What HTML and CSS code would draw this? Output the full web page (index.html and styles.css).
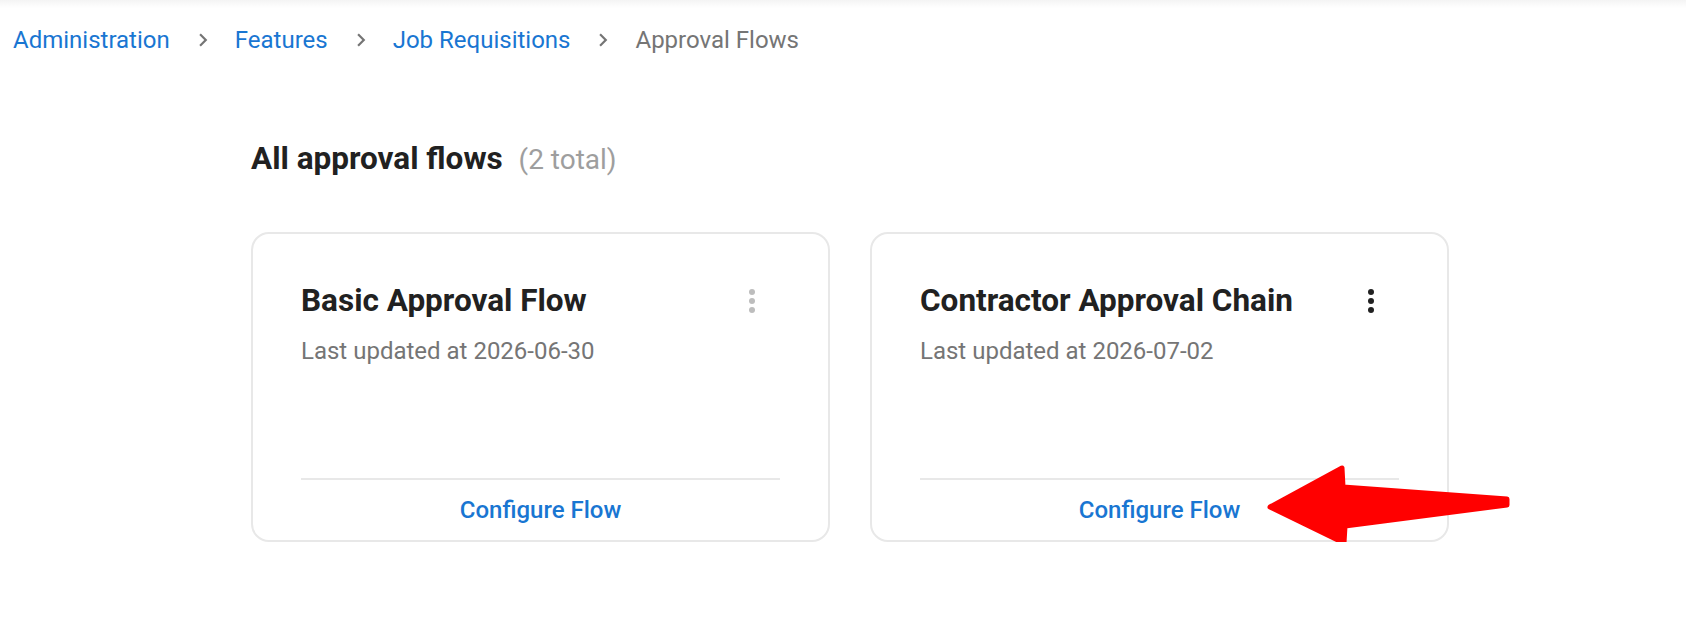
FILE: index.html
```html
<!DOCTYPE html>
<html lang="en">
<head>
    <meta charset="UTF-8">
    <meta name="viewport" content="width=device-width, initial-scale=1.0">
    <title>Approval Flows</title>
    <link rel="stylesheet" href="styles.css">
</head>
<body>
    <div class="top-shade"></div>

    <nav class="breadcrumb">
        <a href="#">Administration</a>
        <svg class="crumb-sep" viewBox="0 0 24 24"><path d="M10 6L8.59 7.41 13.17 12l-4.58 4.59L10 18l6-6z"/></svg>
        <a href="#">Features</a>
        <svg class="crumb-sep" viewBox="0 0 24 24"><path d="M10 6L8.59 7.41 13.17 12l-4.58 4.59L10 18l6-6z"/></svg>
        <a href="#">Job Requisitions</a>
        <svg class="crumb-sep" viewBox="0 0 24 24"><path d="M10 6L8.59 7.41 13.17 12l-4.58 4.59L10 18l6-6z"/></svg>
        <span class="current">Approval Flows</span>
    </nav>

    <main class="content">
        <h1 class="page-title">All approval flows <span class="count">(2 total)</span></h1>

        <div class="flow-list">
            <div class="flow-card">
                <div class="card-head">
                    <h2>Basic Approval Flow</h2>
                    <button class="menu-btn is-muted" aria-label="More">
                        <svg viewBox="0 0 24 28"><circle cx="12" cy="5" r="3"/><circle cx="12" cy="14" r="3"/><circle cx="12" cy="23" r="3"/></svg>
                    </button>
                </div>
                <p class="updated">Last updated at 2026-06-30</p>
                <div class="card-foot">
                    <a href="#">Configure Flow</a>
                </div>
            </div>

            <div class="flow-card">
                <div class="card-head">
                    <h2>Contractor Approval Chain</h2>
                    <button class="menu-btn" aria-label="More">
                        <svg viewBox="0 0 24 28"><circle cx="12" cy="5" r="3"/><circle cx="12" cy="14" r="3"/><circle cx="12" cy="23" r="3"/></svg>
                    </button>
                </div>
                <p class="updated">Last updated at 2026-07-02</p>
                <div class="card-foot">
                    <a href="#">Configure Flow</a>
                </div>
            </div>
        </div>
    </main>

    <!-- annotation arrow pointing at the second card's link -->
    <svg class="pointer-arrow" viewBox="0 0 256 92">
        <polygon points="8,47 80,8 81,27 245,39 245,45 83,66 82,83"/>
    </svg>
</body>
</html>
```

FILE: styles.css
```css
body {
    font-family: Roboto, "Noto Sans", Arial, sans-serif;
    margin: 0;
    padding: 0;
    background: #fff;
    color: #212121;
    position: relative;
}
a {
    color: #1976d2;
    text-decoration: none;
}
.top-shade {
    height: 8px;
    background: linear-gradient(#f4f4f4, #fff);
}
.breadcrumb {
    display: flex;
    align-items: center;
    margin-top: 16px;
    padding-left: 13px;
    font-size: 24px;
    line-height: 32px;
}
.breadcrumb .current {
    color: #757575;
}
.crumb-sep {
    width: 26px;
    height: 26px;
    fill: #757575;
    margin: 0 19px 0 20px;
}
.content {
    padding-left: 251px;
}
.page-title {
    margin: 83px 0 0;
    font-size: 31.5px;
    line-height: 40px;
    font-weight: 700;
    color: #212121;
}
.page-title .count {
    font-size: 28px;
    font-weight: 400;
    color: #9e9e9e;
    margin-left: 8px;
}
.flow-list {
    display: flex;
    gap: 40px;
    margin-top: 52px;
}
.flow-card {
    box-sizing: border-box;
    width: 579px;
    height: 310px;
    border: 2px solid #e8e8e8;
    border-radius: 18px;
    padding: 47px 48px 0;
    display: flex;
    flex-direction: column;
}
.card-head {
    display: flex;
    align-items: center;
    justify-content: space-between;
    height: 40px;
}
.card-head h2 {
    margin: 0;
    font-size: 31.5px;
    line-height: 40px;
    font-weight: 700;
    color: #212121;
}
.menu-btn {
    width: 56px;
    height: 40px;
    border: none;
    background: none;
    padding: 0;
    display: flex;
    align-items: center;
    justify-content: center;
    cursor: pointer;
}
.menu-btn svg {
    width: 24px;
    height: 28px;
    fill: #212121;
}
.menu-btn.is-muted svg {
    fill: #bdbdbd;
}
.updated {
    margin: 14px 0 0;
    font-size: 24px;
    line-height: 32px;
    color: #757575;
}
.card-foot {
    margin-top: auto;
    border-top: 2px solid #e8e8e8;
    padding: 14px 0;
    text-align: center;
    font-size: 24px;
    line-height: 32px;
    font-weight: 500;
}
.pointer-arrow {
    position: absolute;
    left: 1262px;
    top: 460px;
    width: 256px;
    height: 92px;
    fill: #ff0000;
    stroke: #ff0000;
    stroke-width: 5;
    stroke-linejoin: round;
}
```
